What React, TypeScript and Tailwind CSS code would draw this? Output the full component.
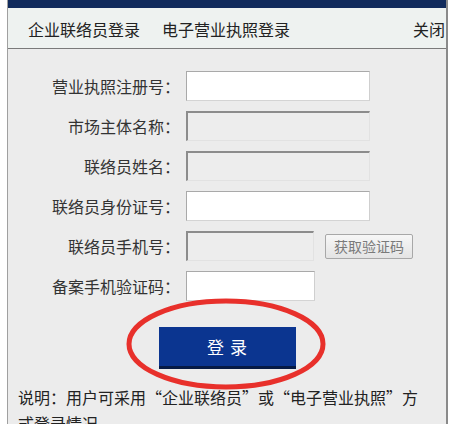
const font = { fontFamily: '"Noto Sans CJK SC", "Noto Sans", sans-serif' }

type Field = { label: string; kind: "text" | "disabled"; width: string; button?: boolean }

const fields: Field[] = [
  { label: "营业执照注册号：", kind: "text", width: "w-[184px]" },
  { label: "市场主体名称：", kind: "disabled", width: "w-[184px]" },
  { label: "联络员姓名：", kind: "disabled", width: "w-[184px]" },
  { label: "联络员身份证号：", kind: "text", width: "w-[184px]" },
  { label: "联络员手机号：", kind: "disabled", width: "w-[128px]", button: true },
  { label: "备案手机验证码：", kind: "text", width: "w-[129px]" },
]

function Input({ kind, width }: { kind: Field["kind"]; width: string }) {
  if (kind === "disabled") {
    return (
      <div
        className={`${width} h-[30px] bg-[#ededed] border-t-2 border-l-2 border-t-[#8c8c8c] border-l-[#8c8c8c] border-r border-b border-r-[#e2e2e2] border-b-[#e2e2e2]`}
      />
    )
  }
  return <div className={`${width} h-[30px] bg-white border border-[#a9a9a9] border-b-[#d4d4d4] border-r-[#cfcfcf]`} />
}

export default function App() {
  return (
    <div lang="zh-CN" className="w-[451px] h-[424px] overflow-hidden bg-white pl-[7px]" style={font}>
      <div className="w-[441px] h-full border-l border-[#a0a0a0] border-r-2 border-r-[#8a8a8a] bg-[#ececec] flex flex-col">
        <div className="h-[8px] bg-[#112b5c] shrink-0" />
        <div className="h-[41px] shrink-0 bg-[#eef2f0] border-b border-[#7a7a7a] flex items-center pl-[20px] pr-[1px] pt-[2px] text-[16px] text-[#222]">
          <span>企业联络员登录</span>
          <span className="ml-[22px]">电子营业执照登录</span>
          <span className="ml-auto">关闭</span>
        </div>
        <div className="pt-[22px] flex flex-col gap-[10px]">
          {fields.map((f) => (
            <div key={f.label} className="flex items-center h-[30px]">
              <div className="w-[172px] text-right text-[16px] text-[#333] leading-none">{f.label}</div>
              <div className="ml-[6px]">
                <Input kind={f.kind} width={f.width} />
              </div>
              {f.button && (
                <div className="ml-[11px] w-[88px] h-[25px] border border-[#a8a8a8] rounded-[2px] bg-gradient-to-b from-[#f7f7f7] to-[#e4e4e4] flex items-center justify-center text-[14px] text-[#7a7a7a]">
                  获取验证码
                </div>
              )}
            </div>
          ))}
        </div>
        <div className="relative mt-[26px] flex justify-center">
          <div className="w-[137px] h-[42px] bg-[#0b3590] border-b-[3px] border-[#061a45] flex items-center justify-center text-white text-[17px] tracking-[6px] pl-[6px]">
            登录
          </div>
          <svg className="absolute left-[116px] top-[-31px]" width="206" height="98" viewBox="0 0 206 98">
            <ellipse cx="102" cy="48" rx="97" ry="43" fill="none" stroke="#e8302b" strokeWidth="5" />
          </svg>
        </div>
        <p className="mt-[15px] pl-[10px] text-[16px] leading-[26px] text-[#222]">
          <span className="whitespace-nowrap">说明：用户可采用“企业联络员”或“电子营业执照”方</span>
          <br />
          式登录情况
        </p>
      </div>
    </div>
  )
}
